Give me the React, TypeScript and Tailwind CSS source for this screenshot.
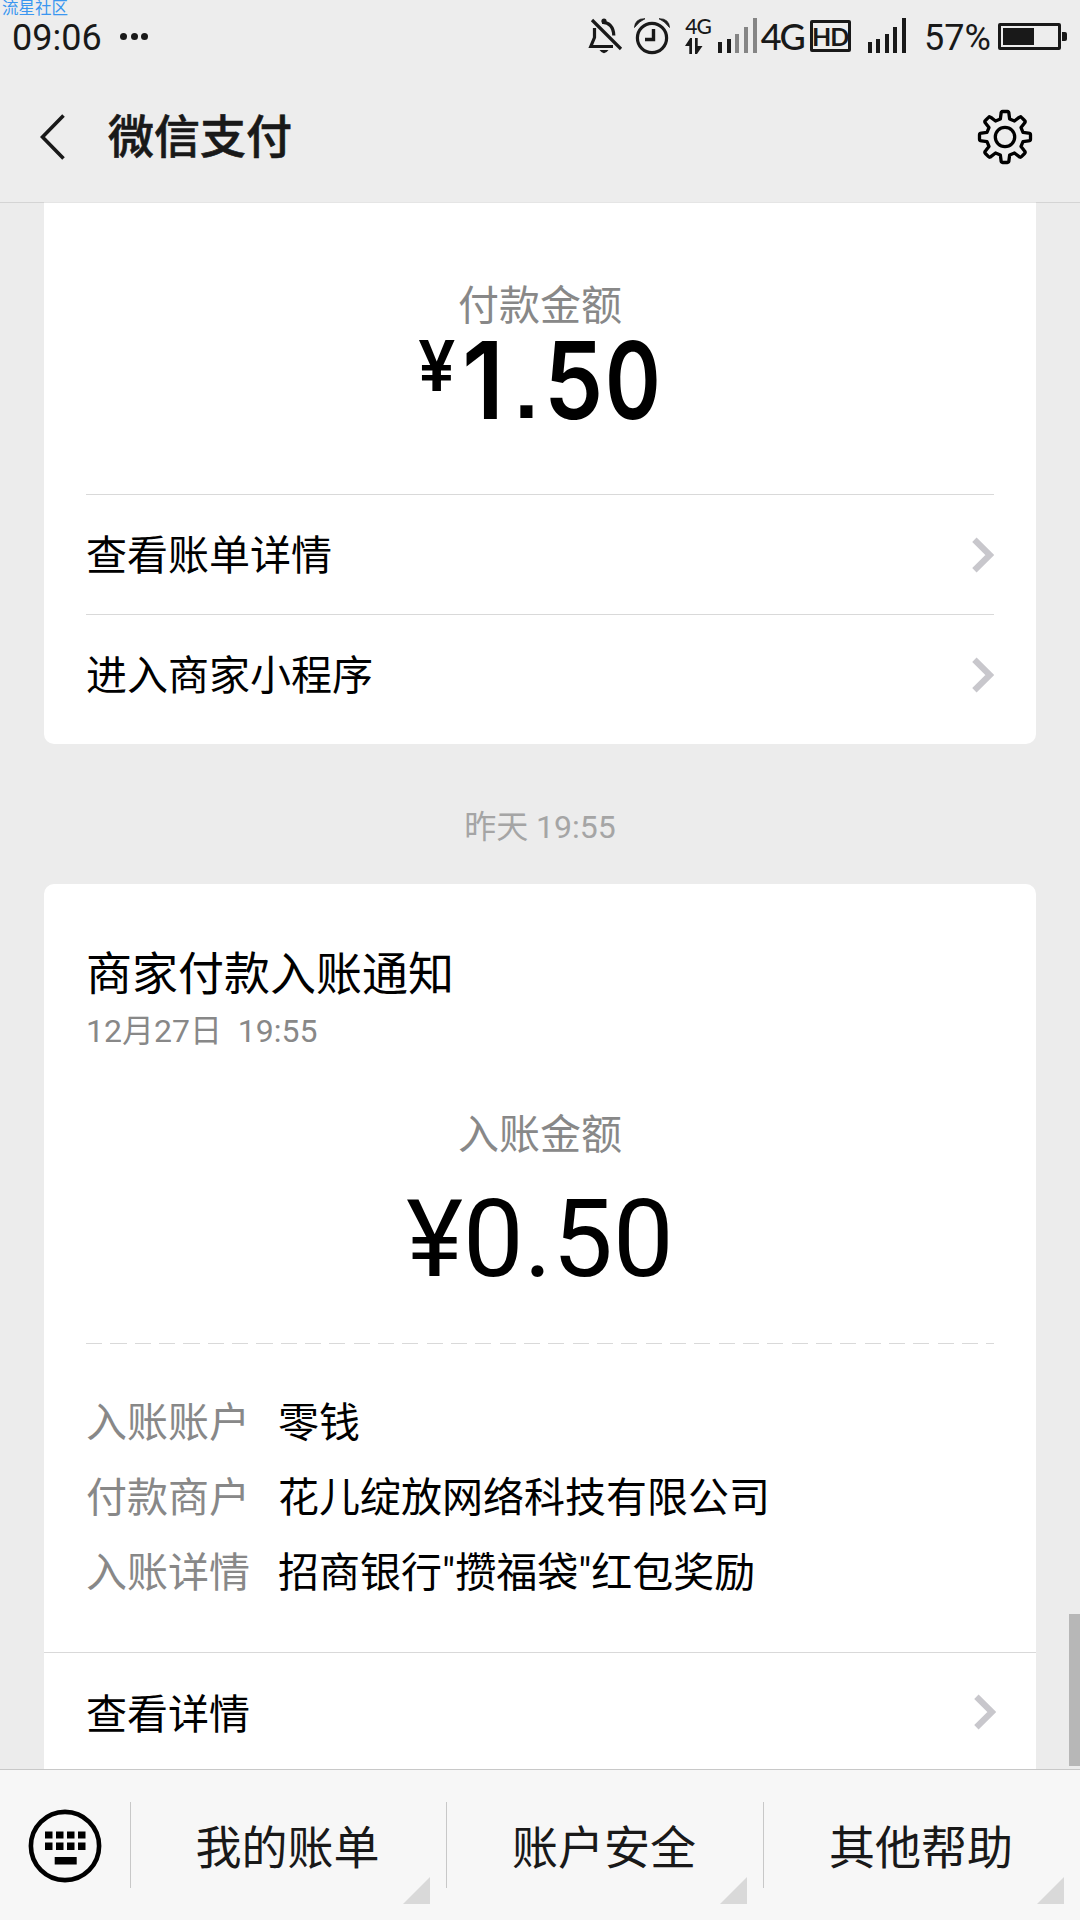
import React from "react";

interface DetailProps {
  label: string;
  value: string;
}

interface SignalProps {
  dim?: boolean;
}

interface LinkRowProps {
  text: string;
}

const details: DetailProps[] = [
  { label: "入账账户", value: "零钱" },
  { label: "付款商户", value: "花儿绽放网络科技有限公司" },
  { label: "入账详情", value: '招商银行"攒福袋"红包奖励' },
];

const menus = ["我的账单", "账户安全", "其他帮助"];

const gearPath = (() => {
  const point = (radius: number, deg: number) => {
    const rad = (deg * Math.PI) / 180;
    return `${(radius * Math.sin(rad)).toFixed(2)} ${(-radius * Math.cos(rad)).toFixed(2)}`;
  };
  let d = "";
  for (let i = 0; i < 8; i++) {
    const a = i * 45;
    d += `${i === 0 ? "M" : "L"}${point(18.6, a - 14.5)}`;
    d += `L${point(23.8, a - 9.5)}Q${point(25.9, a - 9)} ${point(25.6, a - 5)}`;
    d += `L${point(25.6, a + 5)}Q${point(25.9, a + 9)} ${point(23.8, a + 9.5)}`;
    d += `L${point(18.6, a + 14.5)}`;
  }
  return d + "Z";
})();

const GearIcon = () => (
  <svg width="56" height="56" viewBox="-28 -28 56 56" fill="none" stroke="#000" strokeWidth="3.3" strokeLinejoin="round">
    <path d={gearPath} />
    <circle r="9.7" />
  </svg>
);

const BellOffIcon = () => (
  <svg width="36" height="38" viewBox="587 17 36 38" fill="none" stroke="#191919" strokeWidth="3.2">
    <path d="M593.5 28V37.5L589.8 46.5H612" />
    <path d="M601 22.5C608 22 612.6 27 612.8 35.5" />
    <circle cx="603" cy="21" r="2.6" fill="#191919" stroke="none" />
    <path d="M598.5 50H607.5Q603 56.5 598.5 50Z" fill="#191919" stroke="none" />
    <path d="M591 20L620 49" />
  </svg>
);

const AlarmIcon = () => (
  <svg width="38" height="38" viewBox="632 17 38 38" fill="none" stroke="#191919" strokeWidth="3.2">
    <circle cx="651" cy="38" r="14.6" />
    <path d="M652.5 29V39.5H644" strokeWidth="3.4" />
    <path d="M633.5 27.5Q634 18.5 644 18.7Q638.5 21 633.5 27.5Z" fill="#191919" strokeWidth="0.8" />
    <path d="M668.5 27.5Q668 18.5 658 18.7Q663.5 21 668.5 27.5Z" fill="#191919" strokeWidth="0.8" />
  </svg>
);

const DataArrows = () => (
  <svg width="18" height="17" viewBox="0 0 18 17" fill="#191919">
    <path d="M0 8L5.2 0H7V16H4.3V8Z" />
    <path d="M10 0H12.7V8H17.5L12 16H10Z" />
  </svg>
);

const Signal = ({ dim }: SignalProps) => (
  <div className={dim ? "flex items-end gap-[4.6px] [&>*:nth-child(n+3)]:bg-[#858585]" : "flex items-end gap-[4.6px]"}>
    <div className="w-1 h-[11px] bg-[#191919]" />
    <div className="w-1 h-[14px] bg-[#191919]" />
    <div className="w-1 h-[19px] bg-[#191919]" />
    <div className="w-1 h-[26px] bg-[#191919]" />
    <div className="w-1 h-[35px] bg-[#191919]" />
  </div>
);

const Battery = () => (
  <div className="flex items-center">
    <div className="w-[63px] h-[27px] border-[3px] border-[#191919] rounded-[2px] p-[2px]">
      <div className="w-[31px] h-[17px] bg-[#191919]" />
    </div>
    <div className="ml-px w-[5px] h-[9px] bg-[#191919] rounded-r-[2px]" />
  </div>
);

const StatusBar = () => (
  <div className="relative h-[72px] text-[#191919]">
    <span className="absolute left-[2px] top-0 text-[16.5px] leading-[17px] text-[#3b97f0]">流星社区</span>
    <div className="flex h-full">
      <span className="ml-3 mt-[17px] w-[90px] text-[36px] leading-[42px] whitespace-nowrap">09:06</span>
      <div className="ml-[18px] mt-[33px] flex gap-[3.5px]">
        <i className="size-[7px] rounded-full bg-[#191919]" />
        <i className="size-[7px] rounded-full bg-[#191919]" />
        <i className="size-[7px] rounded-full bg-[#191919]" />
      </div>
      <div className="ml-auto flex pt-[17px] pr-[13px]">
        <BellOffIcon />
        <div className="ml-[9px]">
          <AlarmIcon />
        </div>
        <div className="ml-[14px] w-[26px]">
          <div className="h-[21px] font-['Lato'] font-medium text-[21px] leading-[17px] tracking-[-1px]">4G</div>
          <DataArrows />
        </div>
        <div className="ml-[7px] pt-[1px]">
          <Signal dim />
        </div>
        <span className="ml-[4px] w-[45px] font-['Lato'] text-[36px] leading-[39px] font-medium tracking-[-2px]">
          4G
        </span>
        <div className="ml-[4px] mt-[3px] w-[41px] h-[32px] border-[3px] border-[#191919] rounded-[2px] flex items-center justify-center">
          <span className="font-['Lato'] font-bold text-[25px] leading-[26px] tracking-[-1px]">HD</span>
        </div>
        <div className="ml-[17px] pt-[1px]">
          <Signal />
        </div>
        <span className="ml-[18px] w-[74px] text-[36px] leading-[43px]">57%</span>
        <div className="pt-[6px]">
          <Battery />
        </div>
      </div>
    </div>
  </div>
);

const Chevron = () => (
  <svg width="22" height="36" viewBox="0 0 22 36" fill="none" stroke="#c8c7cc" strokeWidth="6.2">
    <path d="M2.4 2.7L17.8 18L2.4 33.3" />
  </svg>
);

const LinkRow = ({ text }: LinkRowProps) => (
  <a className="h-[120px] border-t border-[#d9d9d9] flex items-center justify-between">
    <span className="pt-[3px] text-[41px] leading-[48px]">{text}</span>
    <Chevron />
  </a>
);

const Corner = () => (
  <svg className="absolute right-4 bottom-4" width="27" height="27" viewBox="0 0 27 27">
    <path d="M27 0V27H0Z" fill="#d9d9d9" />
  </svg>
);

const KeyboardIcon = () => (
  <svg width="74" height="74" viewBox="-37 -37 74 74" fill="#000">
    <circle r="34.1" fill="none" stroke="#000" strokeWidth="4.6" />
    {[-20, -9, 2, 13].map((x) => (
      <React.Fragment key={x}>
        <rect x={x} y="-14.5" width="7.5" height="7" />
        <rect x={x} y="-3.5" width="7.5" height="7.5" />
      </React.Fragment>
    ))}
    <rect x="-10.3" y="11" width="22" height="7.5" />
  </svg>
);

// condensed figures, each one in its own slot
const PaidAmount = () => (
  <div className="flex w-[245px] font-['Inter'] font-semibold text-[107px] leading-[98px]">
    <span className="w-[44px] origin-left scale-x-[0.95] text-[70px] leading-[70px]">¥</span>
    <span className="w-[53px] origin-left scale-x-[0.93]">1</span>
    <span className="w-[29px] font-['Liberation_Sans'] font-bold text-[86px] leading-[115px]">.</span>
    <span className="w-[61px] origin-left scale-x-[0.88]">5</span>
    <span className="w-[58px] origin-left scale-x-[0.79]">0</span>
  </div>
);

const App = () => {
  return (
    <div className="w-[1080px] h-[1920px] flex flex-col overflow-hidden bg-[#ededed] text-black font-['Roboto','Noto_Sans_CJK_SC',sans-serif]">
      <header className="h-[202px] shrink-0">
        <StatusBar />
        <div className="h-[130px] flex items-center pl-10 pr-[47px]">
          <svg width="26" height="46" viewBox="0 0 26 46" fill="none" stroke="#191919" strokeWidth="3.6">
            <path d="M23.5 1.5L2.5 23L23.5 44.5" />
          </svg>
          <h1 className="ml-[42px] text-[46px] leading-[56px] font-medium text-[#191919] [-webkit-text-stroke:0.6px_#191919]">
            微信支付
          </h1>
          <button className="ml-auto">
            <GearIcon />
          </button>
        </div>
      </header>

      <main className="relative flex-1 min-h-0 overflow-hidden px-11 bg-[#ececec]">
        <div className="absolute inset-x-0 top-0 h-px bg-black/10" />
        <section className="h-[542px] bg-white rounded-b-[10px] px-[42px]">
          <div className="h-[292px] pt-[80px] flex flex-col items-center">
            <p className="mb-px text-[41px] leading-[48px] text-[#888]">付款金额</p>
            <PaidAmount />
          </div>
          <LinkRow text="查看账单详情" />
          <LinkRow text="进入商家小程序" />
        </section>

        <p className="h-[140px] pt-[63px] text-center text-[32px] leading-[40px] text-[#a5a5a5]">昨天 19:55</p>

        <section className="bg-white rounded-t-[10px]">
          <div className="h-[768px] px-[42px] pt-[62px]">
            <h2 className="text-[46px] leading-[56px]">商家付款入账通知</h2>
            <p className="mt-[9px] text-[32px] leading-[40px] text-[#888] whitespace-pre">{"12月27日  19:55"}</p>
            <p className="mt-[60px] text-center text-[41px] leading-[48px] text-[#888]">入账金额</p>
            <p className="mt-[16px] text-center text-[108px] leading-[128px]">¥0.50</p>
            <div className="mt-[40px] h-px bg-[repeating-linear-gradient(90deg,#d9d9d9_0_16.2px,transparent_16.2px_24.33px)]" />
            <dl className="mt-[42px] text-[41px] leading-[75px]">
              {details.map((item) => (
                <div key={item.label} className="flex gap-7">
                  <dt className="text-[#888]">{item.label}</dt>
                  <dd>{item.value}</dd>
                </div>
              ))}
            </dl>
          </div>
          <div className="border-t border-[#d9d9d9] h-[119px] pl-[42px] pr-[40px] flex items-center justify-between">
            <span className="pt-[5px] text-[41px] leading-[48px]">查看详情</span>
            <Chevron />
          </div>
        </section>
        <div className="absolute right-0 bottom-[3px] w-[11px] h-[152px] bg-[#b7b7b7]" />
      </main>

      <footer className="h-[151px] shrink-0 grid grid-cols-[130px_316px_317px_317px] border-t border-[#c8c8c8] bg-[#f7f7f7] text-[#191919]">
        <div className="pt-[39px] pl-[28px]">
          <KeyboardIcon />
        </div>
        {menus.map((menu) => (
          <div key={menu} className="relative flex">
            <div className="mt-[32px] w-px h-[86px] bg-[#c8c8c8]" />
            <span className="flex-1 pt-[50px] pr-[2px] text-center text-[46px] leading-[56px]">{menu}</span>
            <Corner />
          </div>
        ))}
      </footer>
    </div>
  );
};

export default App;
